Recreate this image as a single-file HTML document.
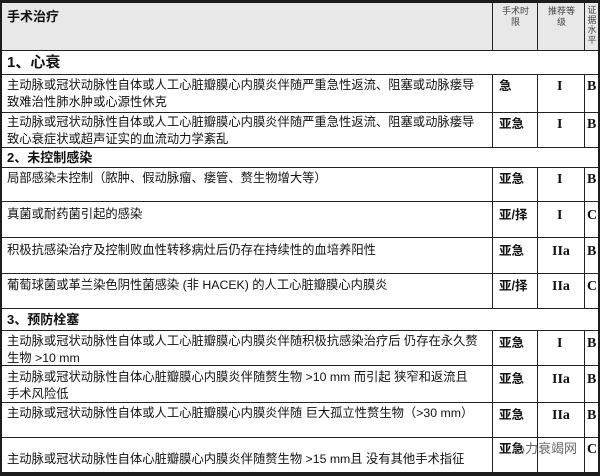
<!DOCTYPE html>
<html><head><meta charset="utf-8"><style>
*{margin:0;padding:0;box-sizing:border-box}
body{width:600px;height:476px;background:#fff;position:relative;overflow:hidden;font-family:"Liberation Sans","Noto Sans CJK SC",sans-serif;color:#111}
.f{position:absolute;background:#1c1c1c}
.h{position:absolute;height:1px;background:#222;left:2px;right:2px}
.v{position:absolute;width:1px;background:#222}
.t{position:absolute;font-size:12.3px;line-height:17px;white-space:nowrap}
.s{font-weight:bold;font-size:13px}
.c{position:absolute;font-size:12.5px;line-height:16px;font-weight:bold;font-family:"Liberation Sans","Noto Sans CJK SC",sans-serif}
.r{position:absolute;font-family:"Liberation Serif",serif;font-weight:bold;font-size:14px;line-height:16px}
.sm{position:absolute;font-size:9px;line-height:11px;color:#444;text-align:center}
</style></head><body>
<div style="position:absolute;left:2px;top:3px;width:596px;height:47px;background:#e8e8e8"></div>
<div class="f" style="left:0;top:0;width:600px;height:3px"></div>
<div class="f" style="left:0;top:0;width:2px;height:476px"></div>
<div class="f" style="right:0;top:0;width:2px;height:476px"></div>
<div class="f" style="left:0;top:472px;width:600px;height:4px"></div>
<div class="h" style="top:50px"></div>
<div class="h" style="top:74px"></div>
<div class="h" style="top:112px"></div>
<div class="h" style="top:147px"></div>
<div class="h" style="top:167px"></div>
<div class="h" style="top:201px"></div>
<div class="h" style="top:237px"></div>
<div class="h" style="top:273px"></div>
<div class="h" style="top:308px"></div>
<div class="h" style="top:330px"></div>
<div class="h" style="top:365px"></div>
<div class="h" style="top:402px"></div>
<div class="h" style="top:437px"></div>
<div class="v" style="left:492px;top:3px;height:47px"></div>
<div class="v" style="left:537px;top:3px;height:47px"></div>
<div class="v" style="left:584px;top:3px;height:47px"></div>
<div class="v" style="left:492px;top:74px;height:73px"></div>
<div class="v" style="left:537px;top:74px;height:73px"></div>
<div class="v" style="left:584px;top:74px;height:73px"></div>
<div class="v" style="left:492px;top:167px;height:141px"></div>
<div class="v" style="left:537px;top:167px;height:141px"></div>
<div class="v" style="left:584px;top:167px;height:141px"></div>
<div class="v" style="left:492px;top:330px;height:142px"></div>
<div class="v" style="left:537px;top:330px;height:142px"></div>
<div class="v" style="left:584px;top:330px;height:142px"></div>

<div class="t s" style="left:7px;top:8px;font-size:13px">手术治疗</div>
<div class="sm" style="left:494px;top:6px;width:43px">手术时<br>限</div>
<div class="sm" style="left:539px;top:6px;width:45px">推荐等<br>级</div>
<div class="sm" style="left:586px;top:5px;width:12px;line-height:10px">证<br>据<br>水<br>平</div>

<div class="t s" style="left:7px;top:54px;font-size:15px">1、心衰</div>
<div class="t" style="left:7px;top:77px">主动脉或冠状动脉性自体或人工心脏瓣膜心内膜炎伴随严重急性返流、阻塞或动脉瘘导<br>致难治性肺水肿或心源性休克</div>
<div class="t" style="left:7px;top:114px">主动脉或冠状动脉性自体或人工心脏瓣膜心内膜炎伴随严重急性返流、阻塞或动脉瘘导<br>致心衰症状或超声证实的血流动力学紊乱</div>
<div class="t s" style="left:7px;top:149px">2、未控制感染</div>
<div class="t" style="left:7px;top:170px">局部感染未控制（脓肿、假动脉瘤、瘘管、赘生物增大等）</div>
<div class="t" style="left:7px;top:206px">真菌或耐药菌引起的感染</div>
<div class="t" style="left:7px;top:242px">积极抗感染治疗及控制败血性转移病灶后仍存在持续性的血培养阳性</div>
<div class="t" style="left:7px;top:277px">葡萄球菌或革兰染色阴性菌感染 (非 HACEK) 的人工心脏瓣膜心内膜炎</div>
<div class="t s" style="left:7px;top:311px">3、预防栓塞</div>
<div class="t" style="left:7px;top:333px">主动脉或冠状动脉性自体或人工心脏瓣膜心内膜炎伴随积极抗感染治疗后 仍存在永久赘<br>生物 &gt;10 mm</div>
<div class="t" style="left:7px;top:369px">主动脉或冠状动脉性自体心脏瓣膜心内膜炎伴随赘生物 &gt;10 mm 而引起 狭窄和返流且<br>手术风险低</div>
<div class="t" style="left:7px;top:405px">主动脉或冠状动脉性自体或人工心脏瓣膜心内膜炎伴随 巨大孤立性赘生物（&gt;30 mm）</div>
<div class="t" style="left:7px;top:451px">主动脉或冠状动脉性自体心脏瓣膜心内膜炎伴随赘生物 &gt;15 mm且 没有其他手术指征</div>

<div class="c" style="left:499px;top:78px">急</div><div class="r" style="left:557px;top:79px">I</div><div class="r" style="left:587px;top:79px">B</div>
<div class="c" style="left:499px;top:116px">亚急</div><div class="r" style="left:557px;top:117px">I</div><div class="r" style="left:587px;top:117px">B</div>
<div class="c" style="left:499px;top:171px">亚急</div><div class="r" style="left:557px;top:172px">I</div><div class="r" style="left:587px;top:172px">B</div>
<div class="c" style="left:499px;top:207px">亚/择</div><div class="r" style="left:557px;top:208px">I</div><div class="r" style="left:587px;top:208px">C</div>
<div class="c" style="left:499px;top:243px">亚急</div><div class="r" style="left:552px;top:244px">IIa</div><div class="r" style="left:587px;top:244px">B</div>
<div class="c" style="left:499px;top:278px">亚/择</div><div class="r" style="left:552px;top:279px">IIa</div><div class="r" style="left:587px;top:279px">C</div>
<div class="c" style="left:499px;top:335px">亚急</div><div class="r" style="left:557px;top:336px">I</div><div class="r" style="left:587px;top:336px">B</div>
<div class="c" style="left:499px;top:371px">亚急</div><div class="r" style="left:552px;top:372px">IIa</div><div class="r" style="left:587px;top:372px">B</div>
<div class="c" style="left:499px;top:407px">亚急</div><div class="r" style="left:552px;top:408px">IIa</div><div class="r" style="left:587px;top:408px">B</div>
<div class="c" style="left:499px;top:441px">亚急</div><div class="r" style="left:587px;top:442px">C</div>
<div class="c" style="left:512px;top:441px;color:#666;font-weight:normal;font-size:13px">心力衰竭网</div>
</body></html>
